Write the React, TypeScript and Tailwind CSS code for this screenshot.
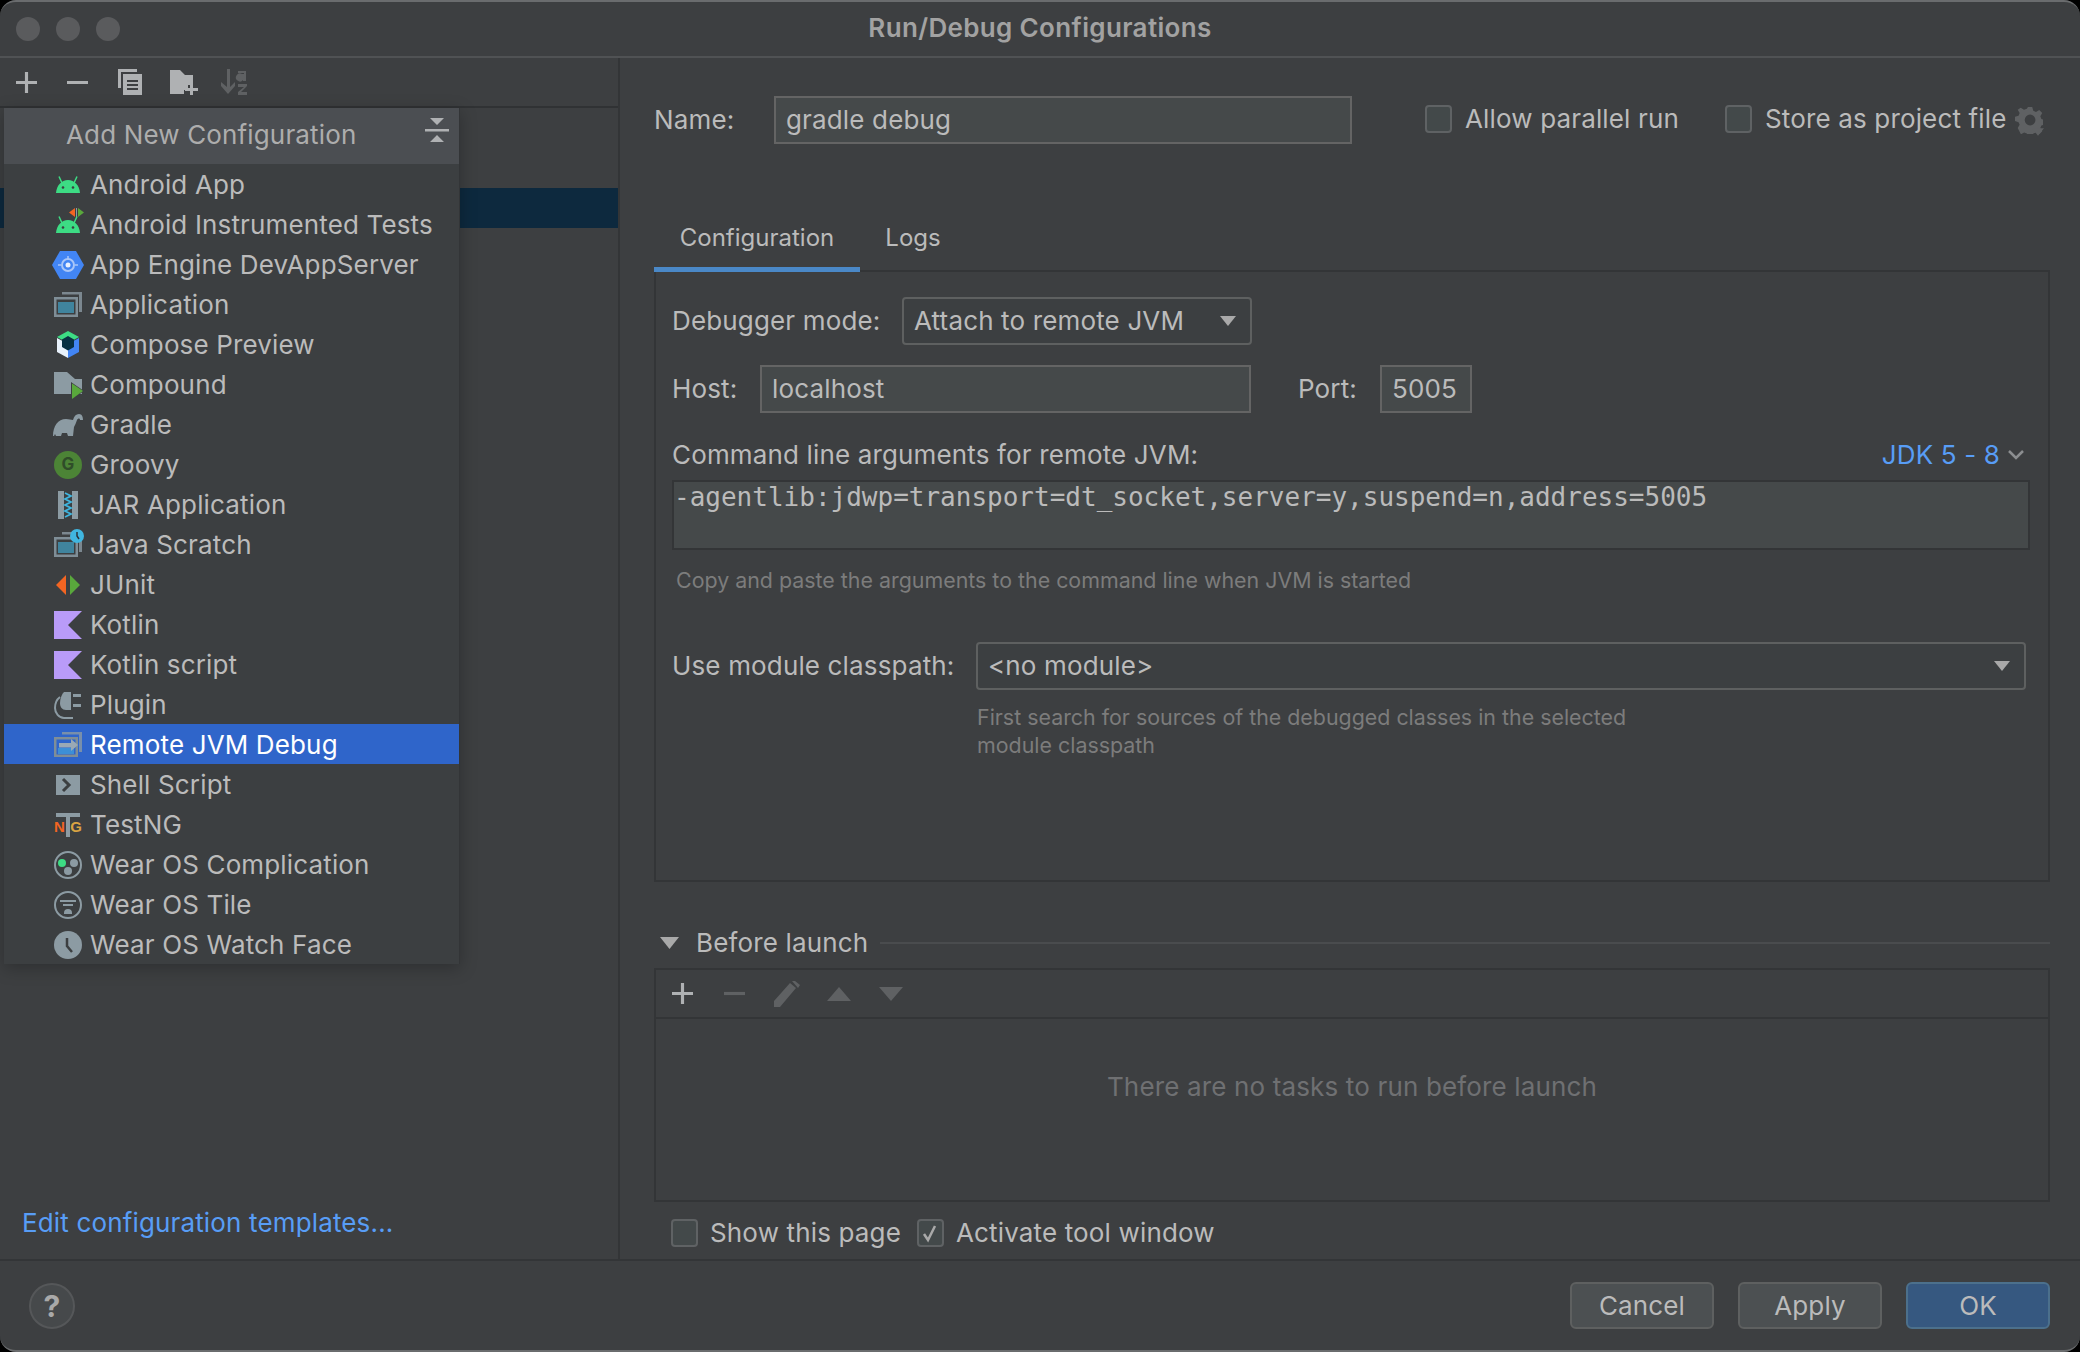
import * as React from "react";

const font = "font-['Inter','Noto_Sans',sans-serif]";

type IconProps = { kind: string };

const Android = ({ flag }: { flag?: boolean }) => (
  <svg viewBox="0 0 28 28" className="w-7 h-7 overflow-visible">
    {flag && <path d="M23 -3v10h-1V-3z" fill="#8c9ba3" />}
    {flag && <path d="M21 -3v9l-6-4.500z" fill="#f26522" />}
    {flag && <path d="M24 -3v9l6-4.500z" fill="#59a83c" />}
    <path d="M2 22c.5-7.500 5.500-13 12-13s11.500 5.500 12 13z" fill="#3ddc84" />
    <path d="M8 12L5 5.500M20 12l3-6.500" stroke="#3ddc84" strokeWidth="1.500" />
    <circle cx="9" cy="16.500" r="1.300" fill="#3c3f41" />
    <circle cx="19" cy="16.500" r="1.300" fill="#3c3f41" />
  </svg>
);

const AppWindow = ({ remote }: { remote?: boolean }) => (
  <svg viewBox="0 0 28 28" className="w-7 h-7">
    <path d="M8 1h20v20h-3V3.500H8z" fill="#8b9aa3" opacity="0.8" />
    <path fillRule="evenodd" d="M0 6h24v20H0zM2.500 8.500v15h19v-15z" fill="#7f8e97" />
    {remote ? (
      <>
        <path d="M4 17h16v6H4z" fill="#3d8fd6" />
        <path d="M5 12h12V8l7 6-7 6v-3.500H5z" fill="#9aa9b5" />
      </>
    ) : (
      <path d="M4 11h16v11H4z" fill="#40849e" />
    )}
  </svg>
);

const Icon = ({ kind }: IconProps) => {
  switch (kind) {
    case "android":
      return <Android />;
    case "androidTest":
      return <Android flag />;
    case "appEngine":
      return (
        <svg viewBox="0 0 32 28" className="w-8 h-7 -mx-0.5">
          <path d="M8 0h16l8 14-8 14H8L0 14z" fill="#4285f4" />
          <circle cx="16" cy="14" r="6" fill="none" stroke="#a9c6f8" strokeWidth="2" />
          <circle cx="16" cy="14" r="2.500" fill="#e8f0fe" />
          <path d="M6 14h3M23 14h3M16 5v3" stroke="#a9c6f8" strokeWidth="1.500" />
        </svg>
      );
    case "application":
      return <AppWindow />;
    case "compose":
      return (
        <svg viewBox="0 0 28 28" className="w-7 h-7">
          <path d="M14 0l11 6-11 6L3 6z" fill="#3ddc84" />
          <path d="M3 7l11 6v14L3 21z" fill="#e8f1fb" />
          <path d="M25 7l-11 6v14l11-6z" fill="#4285f4" />
          <path d="M14 5l6 3.500V16l-6 3.500L8 16V8.500z" fill="#083042" />
        </svg>
      );
    case "compound":
      return (
        <svg viewBox="0 0 30 30" className="w-[30px] h-[30px] -mr-0.5 overflow-visible">
          <path d="M0 2h13l8 7h7v15H0z" fill="#8c9ba3" />
          <path d="M17 12l13 9-13 9z" fill="#3c3f41" />
          <path d="M18 13.500l11 7.500-11 8z" fill="#59a83c" />
        </svg>
      );
    case "gradle":
      return (
        <svg viewBox="0 0 30 24" className="w-[30px] h-6 -mx-px shrink-0">
          <path
            d="M0 23C0 13 5 6 13 6c3 0 5 1 7 1 1-4 3-6 6-6 3 0 4 3 4 6h-3c0-2-2-2-3 0-1 3-2 5-3 7l-1 9h-5l-1-3H9l-1 3H3l-1-2-1 2z"
            fill="#8c9ba3"
          />
        </svg>
      );
    case "groovy":
      return (
        <div className="w-7 h-7 rounded-full bg-[#4c8436] flex items-center justify-center text-[17px] leading-none font-bold text-[#2f4d29]">
          G
        </div>
      );
    case "jar":
      return (
        <svg viewBox="0 0 28 28" className="w-7 h-7">
          <path d="M4 0h20v28H4z" fill="#8c9ba3" />
          <path d="M10 0h8v28h-8z" fill="#3c3f41" />
          <path d="M11 2l6 3-6 3 6 3-6 3 6 3-6 3 6 3-6 3" stroke="#40b6e0" strokeWidth="1.800" fill="none" />
        </svg>
      );
    case "scratch":
      return (
        <div className="relative w-7 h-7">
          <AppWindow />
          <svg viewBox="0 0 14 14" className="absolute -right-0.5 -top-0.5 w-3.5 h-3.5 overflow-visible">
            <circle cx="7" cy="7" r="7" fill="#40b6e0" />
            <path d="M7 3v4l2 3" stroke="#28323a" strokeWidth="1.500" fill="none" />
          </svg>
        </div>
      );
    case "junit":
      return (
        <svg viewBox="0 0 28 28" className="w-7 h-7">
          <path d="M12 4v20L2 14z" fill="#f26522" />
          <path d="M16 4v20l10-10z" fill="#59a83c" />
        </svg>
      );
    case "kotlin":
      return (
        <svg viewBox="0 0 28 28" className="w-7 h-7">
          <path d="M0 0h28L14 14l14 14H0z" fill="#b99bf8" />
        </svg>
      );
    case "plugin":
      return (
        <svg viewBox="0 0 28 28" className="w-7 h-7">
          <path d="M10 1h7v18h-5c-4 0-6-3-6-7 0-5 2-9 4-11z" fill="#8c9ba3" />
          <path d="M19 3h8v3h-8zM19 13h8v3h-8z" fill="#8c9ba3" />
          <path d="M6 6C2 9 1 13 1 17c0 5 4 10 9 10h9" stroke="#8c9ba3" strokeWidth="2" fill="none" />
        </svg>
      );
    case "remote":
      return <AppWindow remote />;
    case "shell":
      return (
        <svg viewBox="0 0 28 28" className="w-7 h-7">
          <path d="M2 4h24v20H2z" fill="#8c9ba3" />
          <path d="M9 8l6 6-6 6" stroke="#3c3f41" strokeWidth="3" fill="none" />
        </svg>
      );
    case "testng":
      return (
        <div className="relative w-7 h-7 flex justify-between text-[15px] leading-[31px] font-bold font-['Liberation_Sans',sans-serif]">
          <span className="text-[#f26522]">N</span>
          <span className="text-[#d9a343]">G</span>
          <svg viewBox="0 0 28 28" className="absolute inset-0 w-7 h-7">
            <path d="M2 2h24v4H16v20h-4V6H2z" fill="#8c9ba3" />
          </svg>
        </div>
      );
    case "wearComp":
      return (
        <svg viewBox="0 0 28 28" className="w-7 h-7">
          <circle cx="14" cy="14" r="13" stroke="#8c9ba3" strokeWidth="2" fill="none" />
          <circle cx="8" cy="12" r="4" fill="#3ddc84" />
          <circle cx="20" cy="12" r="4" fill="#8c9ba3" />
          <circle cx="14" cy="20" r="4" fill="#8c9ba3" />
        </svg>
      );
    case "wearTile":
      return (
        <svg viewBox="0 0 28 28" className="w-7 h-7">
          <circle cx="14" cy="14" r="13" stroke="#8c9ba3" strokeWidth="2" fill="none" />
          <path d="M6 9h16v2H6zM9 13h10v2H9z" fill="#8c9ba3" />
          <path d="M10 22a4 4 0 0 1 8 0v1h-8z" fill="#8c9ba3" />
        </svg>
      );
    case "wearFace":
      return (
        <svg viewBox="0 0 28 28" className="w-7 h-7">
          <circle cx="14" cy="14" r="14" fill="#8c9ba3" />
          <path d="M13 7v8l5 6" stroke="#3c3f41" strokeWidth="2.500" fill="none" />
        </svg>
      );
    default:
      return null;
  }
};

const configTypes = [
  { name: "Android App", icon: "android" },
  { name: "Android Instrumented Tests", icon: "androidTest" },
  { name: "App Engine DevAppServer", icon: "appEngine" },
  { name: "Application", icon: "application" },
  { name: "Compose Preview", icon: "compose" },
  { name: "Compound", icon: "compound" },
  { name: "Gradle", icon: "gradle" },
  { name: "Groovy", icon: "groovy" },
  { name: "JAR Application", icon: "jar" },
  { name: "Java Scratch", icon: "scratch" },
  { name: "JUnit", icon: "junit" },
  { name: "Kotlin", icon: "kotlin" },
  { name: "Kotlin script", icon: "kotlin" },
  { name: "Plugin", icon: "plugin" },
  { name: "Remote JVM Debug", icon: "remote" },
  { name: "Shell Script", icon: "shell" },
  { name: "TestNG", icon: "testng" },
  { name: "Wear OS Complication", icon: "wearComp" },
  { name: "Wear OS Tile", icon: "wearTile" },
  { name: "Wear OS Watch Face", icon: "wearFace" },
];

const Checkbox = ({ checked }: { checked?: boolean }) => (
  <div className="w-[27px] h-[28px] shrink-0 rounded-[4px] border-2 border-[#5f6264] bg-[#43494a] flex items-center justify-center">
    {checked && (
      <svg viewBox="0 0 20 20" className="w-5 h-5">
        <path d="M4 11l4 6 7-14" stroke="#a9a9a9" strokeWidth="2.500" fill="none" />
      </svg>
    )}
  </div>
);

const Arrow = ({ className }: { className: string }) => (
  <svg viewBox="0 0 16 10" className={className}>
    <path d="M0 0h16L8 10z" fill="currentColor" />
  </svg>
);

const Field = ({ text, className }: { text: string; className: string }) => (
  <div className={"h-12 flex items-center px-[10px] bg-[#45494a] border-2 border-[#646464] " + className}>{text}</div>
);

const Combo = ({ text, className }: { text: string; className: string }) => (
  <div className={"h-12 flex items-center justify-between pl-[10px] pr-[14px] bg-[#3c3f41] border-2 border-[#5e6060] rounded-[4px] " + className}>
    <span>{text}</span>
    <Arrow className="w-4 h-2.5 text-[#a9a9a9]" />
  </div>
);

const Btn = ({ label, primary }: { label: string; primary?: boolean }) => (
  <div
    className={
      "w-[144px] h-[47px] pt-px rounded-[6px] border-2 flex items-center justify-center " +
      (primary ? "bg-[#365880] border-[#4c708c] text-[#bbbbbb]" : "bg-[#4c5052] border-[#5e6060] text-[#bbbbbb]")
    }
  >
    {label}
  </div>
);

export default function App() {
  return (
    <div className={"w-[2080px] h-[1352px] bg-black text-[26px] leading-[32px] tracking-[0.15px] text-[#bbbbbb] " + font}>
      <div className="relative w-full h-full flex flex-col rounded-[16px] overflow-hidden bg-[#3d3f41] border-t-2 border-b-2 border-[#6a6c6e]">
        {/* Title bar */}
        <div className="relative h-[56px] shrink-0 flex items-center justify-center pb-[3px] border-b-2 border-[#505254] font-semibold tracking-[0.35px] text-[#a2a2a2]">
          <div className="absolute left-4 top-[15px] flex gap-4">
            <div className="w-6 h-6 rounded-full bg-[#5a5b5d]" />
            <div className="w-6 h-6 rounded-full bg-[#5a5b5d]" />
            <div className="w-6 h-6 rounded-full bg-[#5a5b5d]" />
          </div>
          Run/Debug Configurations
        </div>

        {/* Main */}
        <div className="flex-1 flex min-h-0">
          {/* Left column */}
          <div className="relative w-[620px] shrink-0 flex flex-col border-r-2 border-[#333537]">
            <div className="h-[50px] flex items-center gap-[25px] pl-4 border-b-2 border-[#303234] text-[#afb1b3]">
              <svg viewBox="0 0 20 20" className="w-[21px] h-[21px]">
                <path d="M8.500 0h3v8.500H20v3h-8.500V20h-3v-8.500H0v-3h8.500z" fill="currentColor" />
              </svg>
              <svg viewBox="0 0 20 20" className="w-[21px] h-[21px] ml-[5px] mr-[3px]">
                <path d="M0 8.500h20v3H0z" fill="currentColor" />
              </svg>
              <svg viewBox="0 0 24 26" className="w-6 h-[26px] ml-[2px] mr-[2px]">
                <path d="M0 0h19v3H3v16H0z" fill="currentColor" />
                <path fillRule="evenodd" d="M5 5h19v21H5zM9 11h11v2H9zM9 15h11v2H9zM9 19h11v2H9z" fill="currentColor" />
              </svg>
              <svg viewBox="0 0 28 26" className="w-7 h-[26px] ml-[1px]">
                <path d="M0 1h10l5 5h8v10h-5v5h-4v4H0z" fill="currentColor" />
                <path d="M20 14h3v5h5v3h-5v4h-3v-4h-5v-3h5z" fill="currentColor" />
              </svg>
              <svg viewBox="0 0 28 26" className="w-7 h-[26px] -ml-[3px] text-[#5f6163]">
                <path d="M7 0h3v18l5-5v4l-7 8-7-8v-4l6 5z" fill="currentColor" />
                <path d="M18 2h8v10h-3l0-1a4 4 0 1 1-1-6h2l0-1h-6zM18 15h9v2l-6 6h6v3h-9v-3l6-5h-6z" fill="currentColor" />
              </svg>
            </div>

            <div className="h-10 mt-[80px] bg-[#0d293e]" />

            <div className="mt-auto pl-[22px] pb-[20px] text-[#589df6]">Edit configuration templates...</div>

            {/* Add New Configuration popup */}
            <div className="absolute left-1 top-[50px] w-[456px] bg-[#3c3f41] shadow-[0_4px_16px_rgba(0,0,0,0.25)] border-r border-[#333537] z-10">
              <div className="relative h-14 flex items-center pl-[62px] pb-[2px] bg-[#4b4e52] text-[#adadad]">
                Add New Configuration
                <svg viewBox="0 0 24 24" className="absolute right-[10px] top-[10px] w-6 h-6 text-[#afb1b3]">
                  <path d="M5 0h14l-7 7zM0 11h24v2.500H0zM12 17l7 7H5z" fill="currentColor" />
                </svg>
              </div>
              {configTypes.map((c) => {
                const active = c.name === "Remote JVM Debug";
                return (
                  <div
                    key={c.name}
                    className={"h-10 flex items-center gap-2 pl-[50px] pt-px " + (active ? "bg-[#2f65ca] text-white" : "")}
                  >
                    <div className="w-7 h-7 flex items-center justify-center shrink-0">
                      <Icon kind={c.icon} />
                    </div>
                    <span>{c.name}</span>
                  </div>
                );
              })}
            </div>
          </div>

          {/* Right column */}
          <div className="flex-1 min-w-0 pl-[34px] pr-[30px] flex flex-col">
            <div className="h-[50px] mt-[37px] flex items-center shrink-0">
              <span className="w-[120px]">Name:</span>
              <Field text="gradle debug" className="w-[578px]" />
              <div className="ml-[73px] w-[300px] -mt-[2px] flex items-center gap-[13px]">
                <Checkbox />
                <span>Allow parallel run</span>
              </div>
              <div className="-mt-[2px] flex items-center gap-[13px]">
                <Checkbox />
                <span>Store as project file</span>
              </div>
              <div className="relative ml-[8px]">
                <svg viewBox="-2 0 26 24" className="w-[28px] h-[28px] text-[#5f6163]">
                  <path
                    fillRule="evenodd"
                    d="M10 0h4l1 3.500 2.500 1 3-1.800 2.800 2.800-1.800 3 1 2.500 3.500 1v4l-3.500 1-1 2.500 1.800 3-2.800 2.800-3-1.800-2.500 1-1 3.500h-4l-1-3.500-2.500-1-3 1.800L.5 19.500l1.800-3-1-2.500L-2 13v-4l3.300-1 1-2.500-1.800-3L3.300.7l3 1.800 2.700-1z M12 7a5 5 0 1 0 0 10 5 5 0 0 0 0-10z"
                    fill="currentColor"
                  />
                </svg>
                <svg viewBox="0 0 16 10" className="absolute -right-px -bottom-0.5 w-3 h-2 text-[#5f6163]">
                  <path d="M0 0h16L8 10z" fill="currentColor" />
                </svg>
              </div>
            </div>

            <div className="relative z-10 flex mt-[67px] h-[60px] shrink-0 text-[24px] tracking-normal">
              <div className="w-[206px] flex items-center justify-center pb-1 border-b-[5px] border-[#4a88c7]">Configuration</div>
              <div className="w-[106px] flex items-center justify-center pb-1 border-b-[5px] border-transparent">Logs</div>
            </div>

            {/* Configuration panel */}
            <div className="h-[612px] -mt-[2px] shrink-0 border-2 border-[#333537] pl-4 pr-[18px] pt-[25px]">
              <div className="flex items-center">
                <span className="w-[230px]">Debugger mode:</span>
                <Combo text="Attach to remote JVM" className="w-[350px]" />
              </div>
              <div className="flex items-center mt-[20px]">
                <span className="w-[88px]">Host:</span>
                <Field text="localhost" className="w-[491px]" />
                <span className="ml-[47px] w-[82px]">Port:</span>
                <Field text="5005" className="w-[92px]" />
              </div>
              <div className="flex items-center justify-between mt-[26px] h-[32px] pr-[6px]">
                <span>Command line arguments for remote JVM:</span>
                <span className="flex items-center gap-2 text-[#589df6]">
                  JDK 5 - 8
                  <svg viewBox="0 0 16 10" className="w-4 h-2.5 text-[#8c8e90]">
                    <path d="M1 1l7 7 7-7" stroke="currentColor" strokeWidth="2.500" fill="none" />
                  </svg>
                </span>
              </div>
              <div className="h-[70px] mt-[9px] bg-[#45494a] border-2 border-[#333537] text-[26px] leading-[30px] tracking-normal font-['DejaVu_Sans_Mono',monospace]">
                -agentlib:jdwp=transport=dt_socket,server=y,suspend=n,address=5005
              </div>
              <div className="mt-[15px] pl-1 text-[21.4px] leading-[30px] tracking-normal text-[#7c7c7c]">
                Copy and paste the arguments to the command line when JVM is started
              </div>
              <div className="flex items-center mt-[47px]">
                <span className="w-[304px] shrink-0">Use module classpath:</span>
                <Combo text="<no module>" className="flex-1 mr-[4px]" />
              </div>
              <div className="mt-[13px] ml-[305px] text-[21.4px] leading-[28px] tracking-normal text-[#7c7c7c]">
                First search for sources of the debugged classes in the selected
                <br />
                module classpath
              </div>
            </div>

            {/* Before launch */}
            <div className="flex items-center mt-[45px] h-8 shrink-0">
              <Arrow className="w-[19px] h-3 ml-[6px] text-[#a9a9a9]" />
              <span className="ml-[17px]">Before launch</span>
              <div className="flex-1 h-0.5 ml-3 bg-[#4a4c4e]" />
            </div>
            <div className="mt-[9px] h-[234px] shrink-0 flex flex-col border-2 border-[#333537]">
              <div className="h-[49px] shrink-0 flex items-center gap-[31px] pl-[16px] border-b-2 border-[#333537] text-[#5f6163]">
                <svg viewBox="0 0 20 20" className="w-[21px] h-[21px] text-[#afb1b3]">
                  <path d="M8.500 0h3v8.500H20v3h-8.500V20h-3v-8.500H0v-3h8.500z" fill="currentColor" />
                </svg>
                <svg viewBox="0 0 20 20" className="w-[21px] h-[21px]">
                  <path d="M0 8.500h20v3H0z" fill="currentColor" />
                </svg>
                <svg viewBox="0 0 26 26" className="w-[26px] h-[26px] -ml-[2px]">
                  <path d="M0 26v-6L16 2l6 5L6 26zM18 0l3-0 5 4-2 3z" fill="currentColor" />
                </svg>
                <svg viewBox="0 0 24 14" className="w-6 h-3.5 -ml-[4px]">
                  <path d="M12 0l12 14H0z" fill="currentColor" />
                </svg>
                <svg viewBox="0 0 24 14" className="w-6 h-3.5 -ml-[3px]">
                  <path d="M0 0h24L12 14z" fill="currentColor" />
                </svg>
              </div>
              <div className="flex-1 flex items-center justify-center pb-[46px] text-[#6f7072]">There are no tasks to run before launch</div>
            </div>
            <div className="flex items-center mt-[15px] ml-[17px]">
              <Checkbox />
              <span className="ml-3">Show this page</span>
              <div className="ml-4">
                <Checkbox checked />
              </div>
              <span className="ml-3">Activate tool window</span>
            </div>
          </div>
        </div>

        {/* Footer */}
        <div className="h-[91px] shrink-0 flex items-center justify-between pl-[29px] pr-[30px] border-t-2 border-[#333537]">
          <div className="w-[46px] h-[46px] rounded-full border-2 border-[#555759] bg-[#46494b] flex items-center justify-center text-[30px] font-bold text-[#a9a9a9]">
            ?
          </div>
          <div className="flex gap-6">
            <Btn label="Cancel" />
            <Btn label="Apply" />
            <Btn label="OK" primary />
          </div>
        </div>
      </div>
    </div>
  );
}
